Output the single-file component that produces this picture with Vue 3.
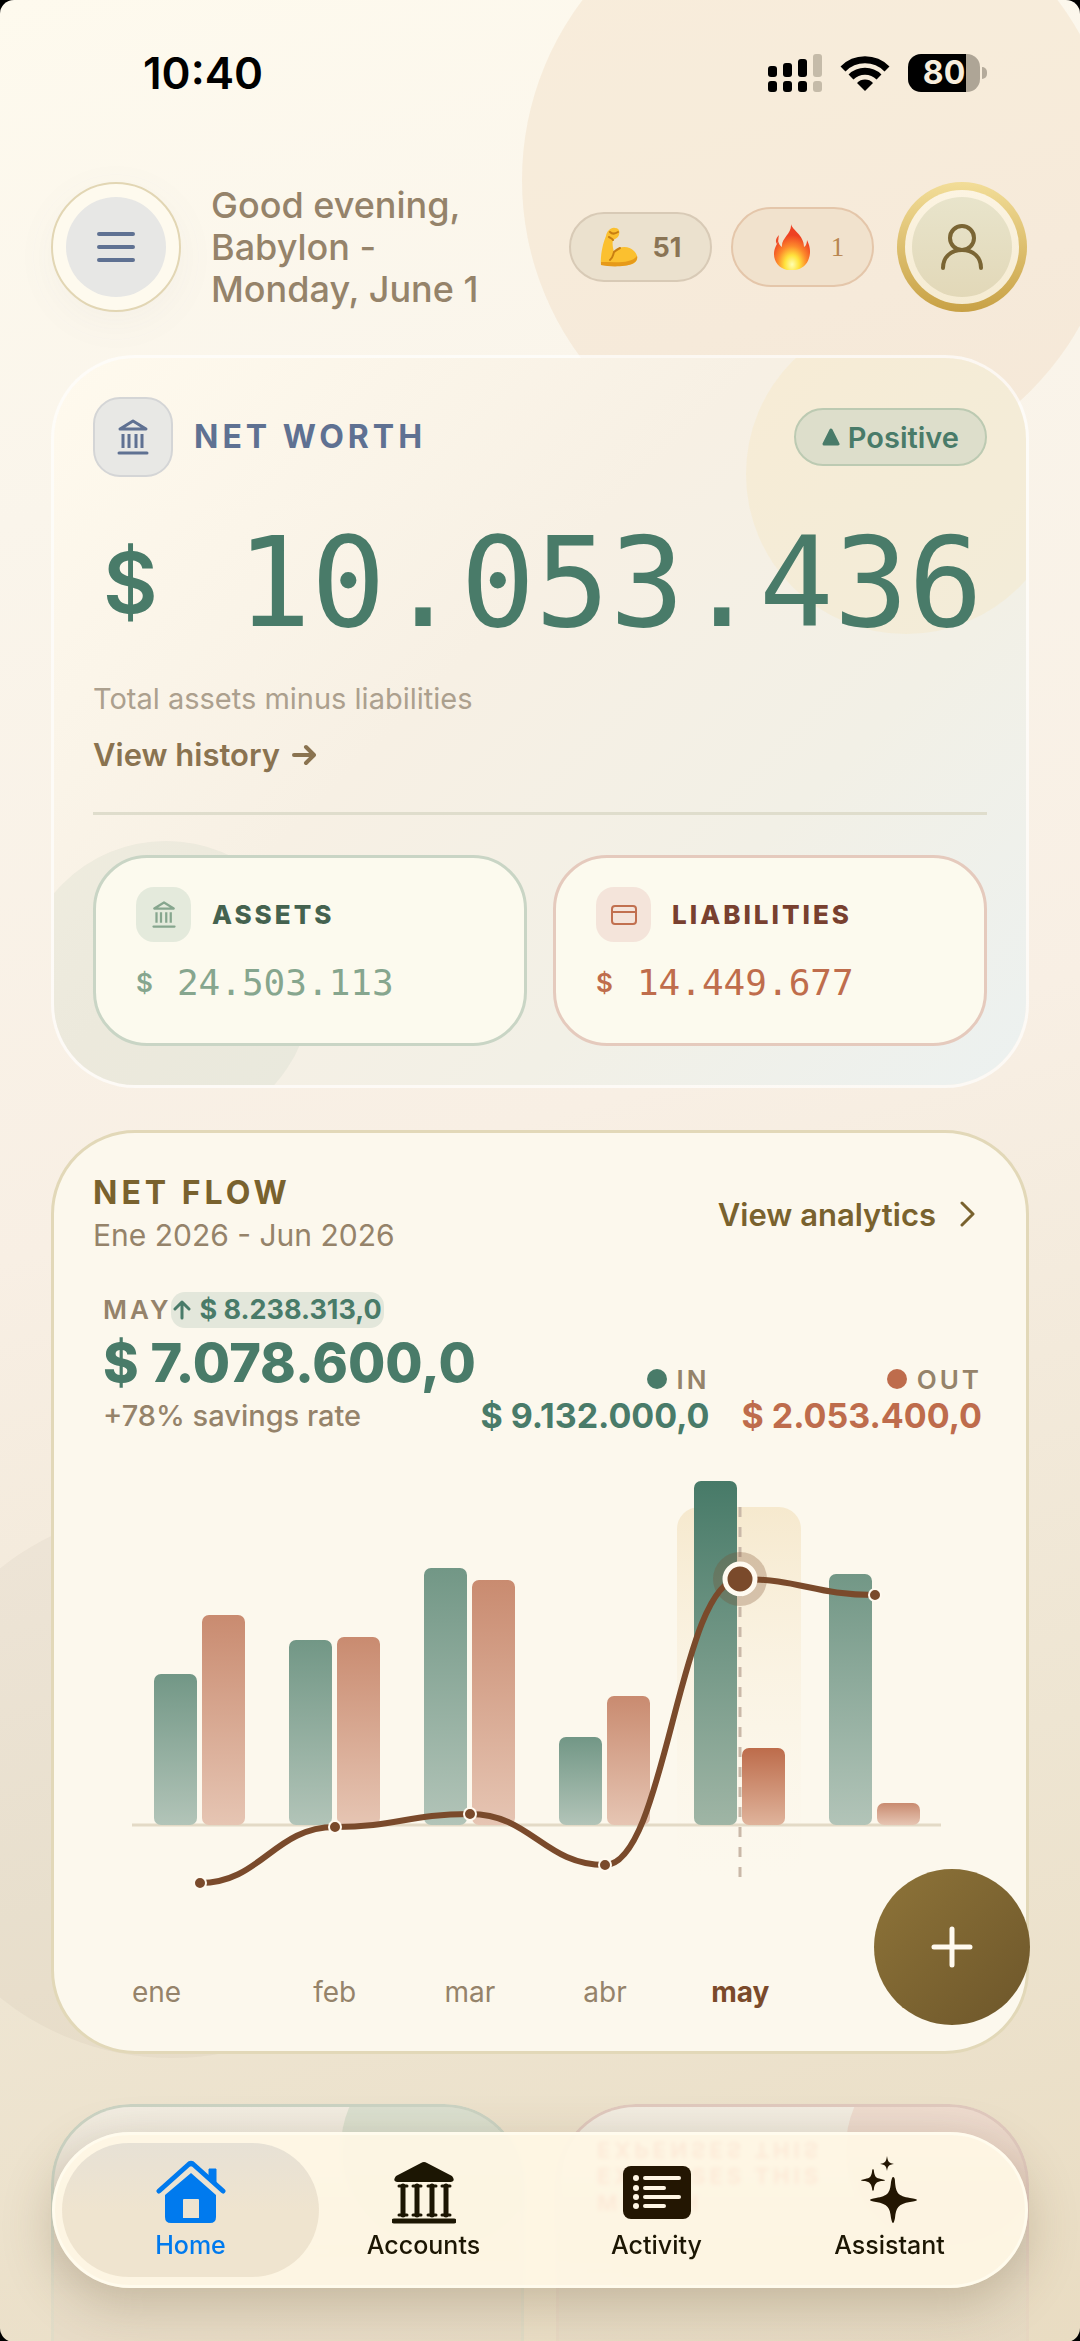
<script setup>
import { computed } from 'vue'

const BASE = 371
const PITCH = 135
const months = [
  { name: 'ene', income: 151, expense: 210, net: 429 },
  { name: 'feb', income: 185, expense: 188, net: 373 },
  { name: 'mar', income: 257, expense: 245, net: 360 },
  { name: 'abr', income: 88, expense: 129, net: 411 },
  { name: 'may', income: 344, expense: 77, net: 125, active: true },
  { name: 'jun', income: 251, expense: 22, net: 141 }
]

const bars = computed(() =>
  months.map((m, i) => ({ ...m, x: 61 + PITCH * i, cx: 107 + PITCH * i }))
)

const linePath = computed(() =>
  bars.value.reduce((path, b, i, all) => {
    if (i === 0) return `M${b.cx} ${b.net}`
    const p = all[i - 1]
    const k = PITCH * 0.45
    return `${path} C${p.cx + k} ${p.net} ${b.cx - k} ${b.net} ${b.cx} ${b.net}`
  }, '')
)
</script>

<template>
  <div class="screen">
    <div class="orb orb-top"></div>
    <div class="orb orb-left"></div>

    <div class="status">
      <span class="time">10:40</span>
      <div class="status-icons">
        <svg width="54" height="38" viewBox="0 0 54 38" aria-hidden="true">
          <rect x="0" y="12" width="9" height="11" rx="3" />
          <rect x="15" y="9" width="9" height="14" rx="3" />
          <rect x="30" y="5" width="9" height="18" rx="3" />
          <rect x="0" y="27" width="9" height="11" rx="3" />
          <rect x="15" y="27" width="9" height="11" rx="3" />
          <rect x="30" y="27" width="9" height="11" rx="3" />
          <rect x="45" y="0" width="9" height="23" rx="3" fill="#c5bba9" />
          <rect x="45" y="27" width="9" height="11" rx="3" fill="#c5bba9" />
        </svg>
        <svg width="50" height="38" viewBox="0 0 50 38" aria-hidden="true">
          <g fill="none" stroke="#000" stroke-width="7">
            <path d="M3 15 A31 31 0 0 1 47 15" />
            <path d="M11 23 A20 20 0 0 1 39 23" />
          </g>
          <path d="M25 37 L17 29 A11 11 0 0 1 33 29 Z" />
        </svg>
        <div class="battery"><span class="level">80</span><i class="tip"></i></div>
      </div>
    </div>

    <header class="header">
      <button class="menu" aria-label="Menu">
        <span class="menu-core">
          <svg width="38" height="32" viewBox="0 0 38 32" stroke="#5f7192" stroke-width="4" stroke-linecap="round">
            <path d="M2 3H36M2 16H36M2 29H36" />
          </svg>
        </span>
      </button>
      <p class="greeting">Good evening,<br />Babylon -<br />Monday, June 1</p>
      <button class="chip chip-score">
        <svg width="38" height="40" viewBox="0 0 38 40" aria-hidden="true">
          <path d="M1 38 C0 29 3 16 6 9 C7 4 11 0 15 1 C19 1 20 4 19 8 C18 11 15 12 13 13 C12 17 13 21 14 25 C20 18 29 19 34 24 C39 29 38 35 32 37 C23 40 9 39 1 38 Z" fill="#fbc02f" />
          <path d="M1 38 C9 40 25 40 32 37 C36 35 38 32 37 29 C31 37 16 35 1 35 Z" fill="#e69a1a" />
          <path d="M14 25 C13 28 13 31 10 33 M14 25 C16 23 18 22 20 21 M10 5 C12 7 15 7 18 5 M13 13 C12 11 10 11 9 10" fill="none" stroke="#c87e12" stroke-width="2" stroke-linecap="round" />
        </svg>
        <span>51</span>
      </button>
      <button class="chip chip-streak">
        <svg width="38" height="46" viewBox="0 0 38 46" aria-hidden="true">
          <defs>
            <radialGradient id="flame" cx=".5" cy=".88" r=".8">
              <stop offset="0" stop-color="#ffffb0" />
              <stop offset=".25" stop-color="#ffe33d" />
              <stop offset=".5" stop-color="#fd8a2c" />
              <stop offset=".8" stop-color="#ee4123" />
            </radialGradient>
          </defs>
          <path d="M18 0 C19 6 31 11 31 23 C33 22 34 19 34 16 C37 22 38 28 36 34 C34 41 29 45 22 46 H14 C6 44 1 38 1 30 C1 24 4 21 5 17 C6 20 7 22 9 23 C8 14 19 10 18 0 Z" fill="url(#flame)" />
          <path d="M6 11 C3 14 2 17 4 20 C6 17 5 14 6 11 Z" fill="#ee4b28" />
        </svg>
        <span>1</span>
      </button>
      <button class="avatar" aria-label="Profile">
        <span class="avatar-core">
          <svg width="44" height="48" viewBox="0 0 44 48" fill="none" stroke="#7a6534" stroke-width="4" stroke-linecap="round">
            <circle cx="22" cy="15" r="12" />
            <path d="M3 45 C3 34 11 27 22 27 S41 34 41 45" />
          </svg>
        </span>
      </button>
    </header>

    <main class="main">
      <section class="card worth">
        <div class="orb orb-gold"></div>
        <div class="orb orb-green"></div>
        <div class="worth-head">
          <span class="tile">
            <svg width="32" height="36" viewBox="0 0 32 36" fill="none" stroke="#5f7192" stroke-width="3" stroke-linecap="round" stroke-linejoin="round">
              <path d="M16 2 L29 10 H3 Z" />
              <path d="M6 15V29M12 15V29M19 15V29M25 15V29" stroke-linecap="butt" />
              <path d="M2 34H30" />
            </svg>
          </span>
          <h2 class="label-lg blue">NET WORTH</h2>
          <span class="positive">
            <svg width="18" height="18" viewBox="0 0 18 18" aria-hidden="true"><path d="M9 2 L16 16 H2 Z" fill="#497b69" stroke="#497b69" stroke-width="3" stroke-linejoin="round" /></svg>
            Positive
          </span>
        </div>
        <p class="amount"><span class="currency">$</span><span>10.053.436</span></p>
        <p class="hint">Total assets minus liabilities</p>
        <a class="history" href="#history">
          View history
          <svg width="24" height="22" viewBox="0 0 24 22" fill="none" stroke="currentColor" stroke-width="4" stroke-linecap="round" stroke-linejoin="round"><path d="M2 11H21M14 3L22 11L14 19" /></svg>
        </a>
        <hr class="rule" />
        <div class="split">
          <article class="mini mini-assets">
            <h3 class="mini-head">
              <span class="mini-tile">
                <svg width="24" height="27" viewBox="0 0 32 36" fill="none" stroke="#86a68e" stroke-width="3" stroke-linecap="round" stroke-linejoin="round">
                  <path d="M16 2 L29 10 H3 Z" />
                  <path d="M6 15V29M12 15V29M19 15V29M25 15V29" stroke-linecap="butt" />
                  <path d="M2 34H30" />
                </svg>
              </span>
              ASSETS
            </h3>
            <p class="mini-value"><span class="mini-currency">$</span>24.503.113</p>
          </article>
          <article class="mini mini-debts">
            <h3 class="mini-head">
              <span class="mini-tile">
                <svg width="28" height="20" viewBox="0 0 28 20" fill="none" stroke="#c1704f" stroke-width="2">
                  <rect x="2" y="1" width="24" height="18" rx="3" />
                  <path d="M2 7H26" />
                </svg>
              </span>
              LIABILITIES
            </h3>
            <p class="mini-value"><span class="mini-currency">$</span>14.449.677</p>
          </article>
        </div>
      </section>

      <section class="card flow">
        <div class="flow-head">
          <div>
            <h2 class="label-lg">NET FLOW</h2>
            <p class="range">Ene 2026 - Jun 2026</p>
          </div>
          <a class="analytics" href="#analytics">
            View analytics
            <svg width="16" height="26" viewBox="0 0 16 26" fill="none" stroke="currentColor" stroke-width="3" stroke-linecap="round" stroke-linejoin="round"><path d="M2 2L13 13L2 24" /></svg>
          </a>
        </div>
        <div class="summary">
          <div class="summary-net">
            <p class="month"><span class="caps">MAY</span><span class="delta"><svg width="18" height="20" viewBox="0 0 18 20" fill="none" stroke="currentColor" stroke-width="3" stroke-linecap="round" stroke-linejoin="round"><path d="M9 18V2M2 9L9 2L16 9" /></svg>$ 8.238.313,0</span></p>
            <p class="net">$ 7.078.600,0</p>
            <p class="rate">+78% savings rate</p>
          </div>
          <div class="totals">
            <div class="total">
              <p class="caps"><i class="dot in"></i>IN</p>
              <p class="sum in-text">$ 9.132.000,0</p>
            </div>
            <div class="total">
              <p class="caps"><i class="dot out"></i>OUT</p>
              <p class="sum out-text">$ 2.053.400,0</p>
            </div>
          </div>
        </div>
        <svg class="chart" viewBox="0 0 894 510" role="img" aria-label="Net flow by month">
          <defs>
            <linearGradient id="inc" x1="0" y1="0" x2="0" y2="1"><stop offset="0" stop-color="#729786" /><stop offset="1" stop-color="#b2c4b8" /></linearGradient>
            <linearGradient id="exp" x1="0" y1="0" x2="0" y2="1"><stop offset="0" stop-color="#c98b70" /><stop offset="1" stop-color="#e6c5b3" /></linearGradient>
            <linearGradient id="incOn" x1="0" y1="0" x2="0" y2="1"><stop offset="0" stop-color="#477a68" /><stop offset="1" stop-color="#9fb5a5" /></linearGradient>
            <linearGradient id="expOn" x1="0" y1="0" x2="0" y2="1"><stop offset="0" stop-color="#bd6c4b" /><stop offset="1" stop-color="#dfb39b" /></linearGradient>
            <linearGradient id="glow" x1="0" y1="0" x2="0" y2="1"><stop offset="0" stop-color="#f6e9ce" /><stop offset="1" stop-color="#fcf6ea" stop-opacity="0" /></linearGradient>
          </defs>
          <rect x="584" y="53" width="124" height="372" rx="22" fill="url(#glow)" />
          <path d="M39 371H848" stroke="#e3dac6" stroke-width="3" />
          <g v-for="b in bars" :key="b.name">
            <rect :x="b.x" :y="BASE - b.income" width="43" :height="b.income" rx="7" :fill="b.active ? 'url(#incOn)' : 'url(#inc)'" />
            <rect :x="b.x + 48" :y="BASE - b.expense" width="43" :height="b.expense" rx="7" :fill="b.active ? 'url(#expOn)' : 'url(#exp)'" />
          </g>
          <path d="M647 53V425" stroke="#c9b8a8" stroke-width="3" stroke-dasharray="10 10" />
          <path :d="linePath" fill="none" stroke="#7a4a2b" stroke-width="6" />
          <template v-for="b in bars" :key="b.name">
            <g v-if="b.active">
              <circle :cx="b.cx" :cy="b.net" r="27" fill="#7a4a2b" fill-opacity=".28" />
              <circle :cx="b.cx" :cy="b.net" r="15" fill="#7a4a2b" stroke="#fffaf0" stroke-width="5" />
            </g>
            <circle v-else :cx="b.cx" :cy="b.net" r="6" fill="#7a4a2b" stroke="#fffaf0" stroke-width="2" />
          </template>
        </svg>
        <ol class="months">
          <li v-for="m in months" :key="m.name" :class="{ active: m.active }">{{ m.name }}</li>
        </ol>
      </section>

      <div class="tiles">
        <article class="peek peek-in"></article>
        <article class="peek peek-out">
          <p><span class="mirror">EXPENSES THIS</span><br />MONTH</p>
        </article>
      </div>
    </main>

    <button class="fab" aria-label="Add">
      <svg width="42" height="42" viewBox="0 0 42 42" stroke="#fffaf0" stroke-width="5" stroke-linecap="round"><path d="M21 3V39M3 21H39" /></svg>
    </button>

    <nav class="tabs">
      <a class="tab current" href="#home">
        <svg width="70" height="64" viewBox="0 0 70 64">
          <path d="M3 31 L32 5 Q35 2 38 5 L67 31" fill="none" stroke="#007aee" stroke-width="5" stroke-linecap="round" stroke-linejoin="round" />
          <path d="M53 9 H60 V26 L53 20 Z" fill="#007aee" stroke="#007aee" stroke-linejoin="round" />
          <path fill-rule="evenodd" d="M35 13 L60 35 V57 Q60 63 54 63 H15 Q9 63 9 57 V35 Z M28 39 Q27 39 27 40 V58 H43 V40 Q43 39 42 39 Z" fill="#007aee" />
        </svg>
        Home
      </a>
      <a class="tab" href="#accounts">
        <svg width="64" height="64" viewBox="0 0 64 64" fill="#1c1603">
          <path d="M29 3 Q32 1 35 3 L60 16 Q64 21 59 22 H5 Q0 21 4 16 Z" />
          <g fill="none" stroke="#1c1603" stroke-linecap="round">
            <path d="M7 26H15M21 26H29M36 26H44M50 26H58M7 55H15M21 55H29M36 55H44M50 55H58" stroke-width="3" />
            <path d="M11 26V55M25 26V55M40 26V55M54 26V55" stroke-width="5" />
            <path d="M2 61H62" stroke-width="5" />
          </g>
        </svg>
        Accounts
      </a>
      <a class="tab" href="#activity">
        <svg width="68" height="64" viewBox="0 0 68 64">
          <rect y="6" width="68" height="53" rx="8" fill="#231602" />
          <g stroke="#fff6e4" stroke-width="4" stroke-linecap="round"><path d="M22 18H56M22 28H41M22 37H56M22 46H41" /></g>
          <g fill="#fff6e4"><circle cx="13" cy="18" r="3" /><circle cx="13" cy="28" r="3" /><circle cx="13" cy="37" r="3" /><circle cx="13" cy="46" r="3" /></g>
        </svg>
        Activity
      </a>
      <a class="tab" href="#assistant">
        <svg width="64" height="68" viewBox="0 0 64 68" fill="#231602">
          <path d="M35 21 Q37 21 37 26 C38 37 40 40 52 42 Q59 43 59 44 Q59 45 52 46 C40 48 38 52 37 62 Q36 67 35 67 Q34 67 33 62 C32 52 30 48 18 46 Q12 45 12 44 Q12 43 18 42 C30 40 32 37 33 26 Q34 21 35 21 Z" />
          <path d="M15 13 Q16 13 16 16 C17 21 18 22 23 23 Q27 24 27 24 Q27 25 23 25 C18 26 17 28 16 32 Q16 35 15 35 Q14 35 14 32 C13 28 12 26 7 25 Q3 25 3 24 Q3 24 7 23 C12 22 13 21 14 16 Q14 13 15 13 Z" />
          <path d="M29 0 C30 6 31 7 36 8 C31 9 30 9 29 15 C28 9 27 9 22 8 C27 7 28 6 29 0 Z" />
        </svg>
        Assistant
      </a>
    </nav>
  </div>
</template>

<style>
body {
  margin: 0;
  background: #000;
}
</style>

<style scoped>
.screen {
  position: relative;
  display: flex;
  flex-direction: column;
  min-height: 100vh;
  overflow: hidden;
  box-sizing: border-box;
  border-radius: 14px;
  font-family: Inter, "Liberation Sans", sans-serif;
  color: #95836a;
  background: linear-gradient(165deg, #fefaee 0%, #faf5eb 20%, #f8efe4 48%, #eee5d2 76%, #e9dcc2 100%);
}
.screen * {
  box-sizing: border-box;
}
p, h2, h3, ol {
  margin: 0;
  padding: 0;
}
button {
  padding: 0;
  border: 0;
  font: inherit;
  color: inherit;
}
a {
  text-decoration: none;
  color: inherit;
}
.orb {
  position: absolute;
  border-radius: 50%;
}
.orb-top {
  width: 596px;
  height: 596px;
  top: -118px;
  right: -38px;
  background: rgba(236, 200, 165, 0.24);
}
.orb-left {
  width: 550px;
  height: 550px;
  top: 1508px;
  left: -103px;
  background: rgba(130, 120, 110, 0.06);
}
.status {
  position: relative;
  display: flex;
  justify-content: space-between;
  align-items: center;
  padding: 46px 94px 0 143px;
  height: 100px;
}
.time {
  font-size: 44px;
  font-weight: 600;
  color: #000;
}
.status-icons {
  display: flex;
  align-items: center;
  gap: 18px;
}
.battery {
  position: relative;
  width: 72px;
  height: 38px;
  margin-right: 6px;
  border-radius: 13px;
  background: linear-gradient(90deg, #000 58px, #aea596 58px);
  text-align: center;
}
.level {
  font-size: 32px;
  line-height: 38px;
  font-weight: 700;
  color: #f8eedd;
}
.tip {
  position: absolute;
  right: -7px;
  top: 13px;
  width: 5px;
  height: 12px;
  border-radius: 0 6px 6px 0;
  background: #b5ab9b;
}
.header {
  position: relative;
  display: flex;
  align-items: center;
  padding: 82px 53px 43px 51px;
}
.menu, .avatar {
  display: flex;
  align-items: center;
  justify-content: center;
  flex: none;
  width: 130px;
  height: 130px;
  border-radius: 50%;
}
.menu {
  background: #fefaee;
  border: 2px solid #e2d6b4;
  box-shadow: 0 10px 40px rgba(120, 120, 140, 0.05);
}
.menu-core, .avatar-core {
  display: flex;
  align-items: center;
  justify-content: center;
  width: 100px;
  height: 100px;
  border-radius: 50%;
}
.menu-core {
  background: #e7e7e5;
}
.avatar {
  margin-left: 23px;
  border: 8px solid transparent;
  background:
    linear-gradient(#fcf4e2, #f5ebd2) padding-box,
    linear-gradient(#f2dd98, #c8a145) border-box;
}
.avatar-core {
  background: linear-gradient(#e8e4cb, #e2d8b8);
}
.greeting {
  flex: 1;
  margin-left: 30px;
  font-size: 36px;
  line-height: 42px;
  font-weight: 500;
  white-space: nowrap;
}
.chip {
  display: flex;
  align-items: center;
  justify-content: center;
  width: 143px;
  border: 2px solid #d8cab6;
  border-radius: 40px;
}
.chip-score {
  height: 70px;
  gap: 15px;
  background: #ebe1ce;
  font-size: 27px;
  font-weight: 700;
  color: #8a7455;
}
.chip-streak {
  height: 80px;
  margin-left: 19px;
  gap: 20px;
  padding-left: 12px;
  background: #f1e2cd;
  border-color: #e4c6aa;
  font-family: "Liberation Serif", serif;
  font-size: 27px;
  color: #b98752;
}
.main {
  position: relative;
  display: flex;
  flex-direction: column;
  flex: 1;
  padding: 0 51px;
}
.card {
  position: relative;
  padding: 39px;
  border: 3px solid #fffbf3;
  border-radius: 84px;
}
.worth {
  overflow: hidden;
  background: linear-gradient(135deg, #fffaee 0%, #f7f0e4 42%, #f2f0e6 70%, #ecf1f0 100%);
  border-color: rgba(255, 255, 255, 0.65);
  background-clip: padding-box;
}
.worth > :not(.orb) {
  position: relative;
}
.orb-gold {
  width: 320px;
  height: 320px;
  top: -44px;
  right: -40px;
  background: rgba(246, 226, 170, 0.24);
}
.orb-green {
  width: 292px;
  height: 292px;
  left: -34px;
  bottom: -48px;
  background: rgba(120, 150, 130, 0.08);
}
.worth-head {
  display: flex;
  align-items: center;
}
.tile {
  display: flex;
  align-items: center;
  justify-content: center;
  width: 80px;
  height: 80px;
  margin-right: 21px;
  border: 2px solid #d4d5d6;
  border-radius: 27px;
  background: #e8e8e5;
}
.label-lg {
  font-size: 32px;
  line-height: 42px;
  font-weight: 700;
  letter-spacing: 4px;
  color: #79622e;
}
.blue {
  color: #5f7192;
}
.positive {
  display: flex;
  align-items: center;
  gap: 8px;
  margin-left: auto;
  padding: 0 26px;
  height: 58px;
  border: 2px solid #bccab2;
  border-radius: 29px;
  background: #dddecb;
  font-size: 29px;
  font-weight: 600;
  color: #497b69;
}
.amount {
  display: flex;
  align-items: center;
  justify-content: space-between;
  margin-top: 44px;
  padding: 0 4px 0 10px;
  font-family: "DejaVu Sans Mono", monospace;
  font-size: 124px;
  line-height: 124px;
  color: #497b69;
}
.currency, .mini-currency {
  font-family: Inter, "Liberation Sans", sans-serif;
  font-weight: 600;
}
.currency {
  font-size: 84px;
}
.hint {
  margin-top: 36px;
  font-size: 29px;
  line-height: 36px;
  color: #aca08e;
}
.history {
  display: flex;
  align-items: center;
  gap: 12px;
  margin-top: 18px;
  font-size: 31px;
  line-height: 40px;
  font-weight: 600;
  color: #8a7350;
}
.rule {
  height: 3px;
  margin: 37px 0 40px;
  border: 0;
  background: #dfddcc;
}
.split {
  display: grid;
  grid-template-columns: 1fr 1fr;
  gap: 26px;
}
.mini {
  padding: 29px 40px 40px;
  border: 3px solid #c9d5c5;
  border-radius: 54px;
  background: #fcfaee;
}
.mini-debts {
  border-color: #e5cabd;
}
.mini-head {
  display: flex;
  align-items: center;
  gap: 21px;
  font-size: 26px;
  font-weight: 800;
  letter-spacing: 3px;
  color: #44624f;
}
.mini-debts .mini-head {
  color: #78402f;
}
.mini-tile {
  display: flex;
  align-items: center;
  justify-content: center;
  width: 55px;
  height: 55px;
  border-radius: 18px;
  background: #e4eadc;
}
.mini-debts .mini-tile {
  background: #f4e4da;
}
.mini-value {
  display: flex;
  align-items: center;
  gap: 24px;
  margin-top: 21px;
  font-family: "DejaVu Sans Mono", monospace;
  font-size: 36px;
  line-height: 40px;
  color: #86a68e;
}
.mini-debts .mini-value {
  color: #bf6d4c;
}
.mini-currency {
  font-size: 26px;
}
.flow {
  margin-top: 42px;
  background: #fcf8ed;
  border-color: #e2d8b8;
}
.flow-head {
  display: flex;
  align-items: center;
  justify-content: space-between;
}
.range {
  font-size: 30px;
  line-height: 42px;
}
.analytics {
  display: flex;
  align-items: center;
  gap: 24px;
  margin-right: 11px;
  font-size: 31px;
  font-weight: 600;
  color: #79622e;
}
.summary {
  display: flex;
  align-items: flex-end;
  justify-content: space-between;
  margin-top: 36px;
  padding: 0 5px 0 10px;
  white-space: nowrap;
}
.month {
  display: flex;
  align-items: center;
}
.caps {
  font-size: 26px;
  line-height: 36px;
  font-weight: 600;
  letter-spacing: 3px;
}
.delta {
  display: flex;
  align-items: center;
  gap: 8px;
  padding: 0 2px;
  border-radius: 14px;
  background: #e3e7db;
  font-size: 27px;
  line-height: 36px;
  font-weight: 700;
  color: #497b69;
}
.net {
  margin: 4px 0;
  font-size: 54px;
  line-height: 62px;
  font-weight: 800;
  color: #497b69;
}
.rate {
  font-size: 29px;
  line-height: 36px;
  font-weight: 500;
}
.totals {
  display: flex;
  gap: 32px;
  text-align: right;
}
.sum {
  font-size: 34px;
  line-height: 36px;
  font-weight: 700;
}
.in-text {
  color: #497b69;
}
.out-text {
  color: #be6c4c;
}
.dot {
  display: inline-block;
  width: 20px;
  height: 20px;
  margin-right: 10px;
  border-radius: 50%;
}
.in {
  background: #497b69;
}
.out {
  background: #be6c4c;
}
.chart {
  display: block;
  width: 100%;
  margin-top: 20px;
}
.months {
  display: grid;
  grid-template-columns: repeat(6, 1fr);
  margin-top: 8px;
  padding: 0 44px 0 39px;
  list-style: none;
  font-size: 28px;
  line-height: 40px;
  text-align: center;
}
.months li:first-child {
  text-align: left;
}
.months li:last-child {
  text-align: right;
}
.months .active {
  font-weight: 700;
  color: #7a4a2b;
}
.tiles {
  display: grid;
  grid-template-columns: 1fr 1fr;
  gap: 32px;
  flex: 1;
  min-height: 238px;
  margin-top: 50px;
}
.peek {
  position: relative;
  overflow: hidden;
  border: 3px solid #cbd3c3;
  border-bottom: 0;
  border-radius: 80px 80px 0 0;
  background: linear-gradient(#f2ede2, #ddd2c0 60%, #e0d5c2);
  mask-image: linear-gradient(#000 40%, rgba(0, 0, 0, 0.3) 80%);
}
.peek-out {
  padding: 56px 38px 0;
  border-color: #e0c9be;
  font-size: 22px;
  line-height: 27px;
  font-weight: 700;
  letter-spacing: 4px;
  color: #d64b3a;
}
.peek::before {
  content: "";
  position: absolute;
  width: 200px;
  height: 200px;
  top: -60px;
  right: -20px;
  border-radius: 50%;
  background: rgba(130, 175, 140, 0.2);
}
.peek-out::before {
  background: rgba(215, 130, 110, 0.16);
}
.mirror {
  display: inline-block;
  -webkit-box-reflect: above 0;
}
.fab {
  position: fixed;
  right: 50px;
  bottom: 316px;
  display: flex;
  align-items: center;
  justify-content: center;
  width: 156px;
  height: 156px;
  border-radius: 50%;
  background: linear-gradient(135deg, #8e7439, #6d562a);
}
.tabs {
  position: fixed;
  left: 52px;
  right: 52px;
  bottom: 53px;
  display: grid;
  grid-template-columns: repeat(4, 1fr);
  padding: 8px 19px;
  border: 3px solid #fffbed;
  border-radius: 78px;
  background: rgba(255, 247, 229, 0.92);
  backdrop-filter: blur(2px);
  box-shadow: 0 16px 50px rgba(90, 70, 40, 0.25);
}
.tab {
  position: relative;
  display: flex;
  flex-direction: column;
  align-items: center;
  justify-content: flex-end;
  height: 134px;
  gap: 4px;
  padding-bottom: 15px;
  font-size: 25px;
  line-height: 34px;
  font-weight: 500;
  color: #1c1603;
}
.current {
  margin: 0 -12px;
  border-radius: 67px;
  background: linear-gradient(#e7e1d5, #efe4cf 50%);
  color: #007aee;
}
</style>
